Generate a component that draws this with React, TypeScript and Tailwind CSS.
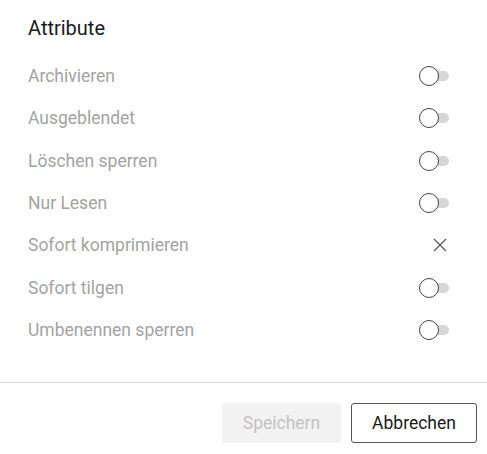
const ATTRIBUTES = [
  { label: "Archivieren", kind: "toggle" },
  { label: "Ausgeblendet", kind: "toggle" },
  { label: "Löschen sperren", kind: "toggle" },
  { label: "Nur Lesen", kind: "toggle" },
  { label: "Sofort komprimieren", kind: "close" },
  { label: "Sofort tilgen", kind: "toggle" },
  { label: "Umbenennen sperren", kind: "toggle" },
];

function Toggle() {
  return (
    <div className="relative w-[30px] h-[20px] flex items-center">
      <div className="absolute left-[4px] right-0 h-[10px] rounded-full bg-[#d6d6d6]" />
      <div className="absolute left-0 top-0 w-[20px] h-[20px] rounded-full bg-white border border-[#444]" />
    </div>
  );
}

function CloseIcon() {
  return (
    <svg width="14" height="14" viewBox="0 0 14 14" className="mr-[2px]">
      <path d="M1 1L13 13M13 1L1 13" stroke="#555" strokeWidth="1.2" />
    </svg>
  );
}

export default function App() {
  return (
    <div
      className="w-[487px] h-[454px] bg-white flex flex-col"
      style={{ fontFamily: "Roboto, 'Liberation Sans', sans-serif" }}
    >
      <div className="pl-[28px] pr-[38px] pt-[16px]">
        <h1 className="text-[20px] leading-[24px] text-[#1a1a1a] mb-[15px]">Attribute</h1>
        <div>
          {ATTRIBUTES.map((a) => (
            <div key={a.label} className="h-[42.33px] flex items-center justify-between">
              <span className="text-[17.5px] text-[#a3a3a3]">{a.label}</span>
              {a.kind === "toggle" ? <Toggle /> : <CloseIcon />}
            </div>
          ))}
        </div>
      </div>
      <div className="mt-[31px] border-t border-[#d4d4d4]" />
      <div className="flex justify-end gap-[10px] pt-[20px] pr-[10px]">
        <button className="w-[119px] h-[40px] rounded-[3px] bg-[#f2f2f2] text-[17.5px] text-[#c2c2c2]">
          Speichern
        </button>
        <button className="w-[126px] h-[40px] rounded-[3px] border border-[#555] text-[17.5px] text-[#1a1a1a]">
          Abbrechen
        </button>
      </div>
    </div>
  );
}
